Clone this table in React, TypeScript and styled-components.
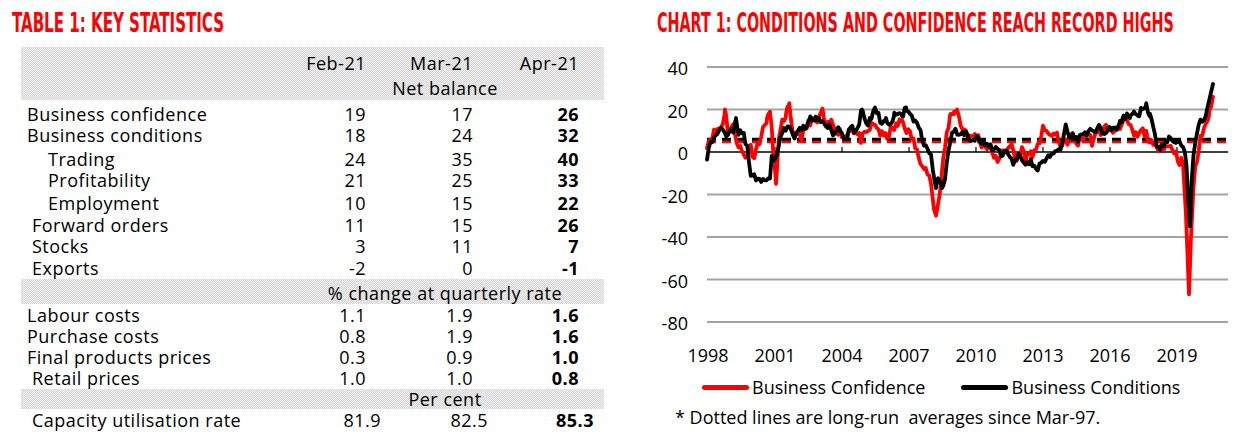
import React from "react";
import styled, { createGlobalStyle } from "styled-components";

const GlobalStyle = createGlobalStyle`
  html, body {
    margin: 0;
    padding: 0;
    background: #fff;
    overflow: hidden;
  }
  body {
    font-family: "Open Sans", "Noto Sans", sans-serif;
    color: #000;
  }
`;

const Page = styled.div`
  width: 1245px;
  height: 443px;
  overflow: hidden;
`;

// the last line of the paragraph above, cut off by the page edge
const TopClip = styled.div`
  height: 7px;
  overflow: hidden;
  padding-left: 118px;
`;

const ClippedLine = styled.p`
  margin: -26px 0 0;
  font-size: 18px;
  line-height: 24px;
  white-space: nowrap;
`;

const Columns = styled.div`
  display: flex;
`;

const LeftColumn = styled.section`
  width: 640px;
  flex: none;
`;

const RightColumn = styled.section`
  flex: 1;
`;

const Heading = styled.h2<{ $indent: number; $scale: number }>`
  margin: 2px 0 0;
  padding-left: ${(p) => p.$indent}px;
  height: 28px;
  font-family: "DejaVu Sans Condensed", "DejaVu Sans", sans-serif;
  font-weight: bold;
  font-size: 27px;
  line-height: 28px;
  color: #f00;
  white-space: nowrap;

  span {
    display: inline-block;
    transform: scaleX(${(p) => p.$scale});
    transform-origin: left center;
  }
`;

const Table = styled.div`
  margin: 10px 0 0 21px;
  width: 583px;
  font-size: 18px;
  letter-spacing: 0.5px;
`;

const Band = styled.div<{ $lh: number; $height: number; $pad: number }>`
  box-sizing: border-box;
  height: ${(p) => p.$height}px;
  padding-top: ${(p) => p.$pad}px;
  line-height: ${(p) => p.$lh}px;
  background: repeating-conic-gradient(#d5d5d5 0 25%, #f1f1f1 0 50%) 0 0 / 2px 2px;
`;

const DataRows = styled.div<{ $top?: number }>`
  padding-top: ${(p) => p.$top ?? 0}px;
  line-height: 21px;
`;

const Row = styled.div<{ $space?: number; $shift?: number }>`
  display: grid;
  grid-template-columns: ${(p) => 279 + (p.$shift ?? 0)}px 66px 107px 106px;
  margin-top: ${(p) => p.$space ?? 0}px;
`;

const Label = styled.div<{ $indent: number }>`
  padding-left: ${(p) => p.$indent}px;
  white-space: nowrap;
`;

const Value = styled.div<{ $bold?: boolean }>`
  text-align: right;
  font-weight: ${(p) => (p.$bold ? 700 : 400)};
`;

const SectionLabel = styled.div`
  margin-left: 279px;
  padding-right: 14px;
  text-align: center;
`;

const ChartBox = styled.div`
  margin-top: 11px;
  height: 322px;

  svg {
    display: block;
  }
`;

const Legend = styled.div`
  display: flex;
  align-items: center;
  gap: 36px;
  margin-top: 6px;
  padding-left: 62px;
  font-size: 18px;
  line-height: 22px;
`;

const LegendItem = styled.div`
  display: flex;
  align-items: center;
  gap: 3px;
`;

const Swatch = styled.span<{ $color: string }>`
  width: 47px;
  height: 5px;
  border-radius: 3px;
  background: ${(p) => p.$color};
`;

const Footnote = styled.p`
  margin: 8px 0 0;
  padding-left: 35px;
  font-size: 18px;
  line-height: 22px;
  white-space: pre;
`;

type StatRow = {
  label: string;
  indent: number;
  v: string[];
  space?: number;
};

const netRows: StatRow[] = [
  { label: "Business confidence", indent: 6, v: ["19", "17", "26"] },
  { label: "Business conditions", indent: 6, v: ["18", "24", "32"] },
  { label: "Trading", indent: 27, v: ["24", "35", "40"], space: 3 },
  { label: "Profitability", indent: 27, v: ["21", "25", "33"] },
  { label: "Employment", indent: 27, v: ["10", "15", "22"], space: 2 },
  { label: "Forward orders", indent: 11, v: ["11", "15", "26"], space: 1 },
  { label: "Stocks", indent: 11, v: ["3", "11", "7"] },
  { label: "Exports", indent: 11, v: ["-2", "0", "-1"], space: 1 },
];

const changeRows: StatRow[] = [
  { label: "Labour costs", indent: 6, v: ["1.1", "1.9", "1.6"] },
  { label: "Purchase costs", indent: 6, v: ["0.8", "1.9", "1.6"] },
  { label: "Final products prices", indent: 6, v: ["0.3", "0.9", "1.0"] },
  { label: "Retail prices", indent: 11, v: ["1.0", "1.0", "0.8"] },
];

const renderRow = (r: StatRow) => (
  <Row key={r.label} $space={r.space}>
    <Label $indent={r.indent}>{r.label}</Label>
    <Value>{r.v[0]}</Value>
    <Value>{r.v[1]}</Value>
    <Value $bold>{r.v[2]}</Value>
  </Row>
);

// chart geometry, in page pixels
const X0 = 707;
const X1 = 1228;
const ZERO = 152;
const STEP = 2.125; // px per index point
const yOf = (v: number) => ZERO - v * STEP;

const confidenceAnchors: [number, number][] = [
  [707, 4], [712, 8], [718, 11], [722, 12], [725, 20], [728, 10], [733, 12], [738, 4],
  [742, 0], [746, -3], [750, 3], [754, -2], [758, 4], [763, 10], [767, 16], [770, 19],
  [772, 8], [774, -5], [776, -15], [778, 3], [782, 13], [786, 18], [789, 22], [793, 6],
  [797, 10], [802, 7], [808, 13], [812, 16], [816, 12], [822, 20], [826, 11], [831, 14],
  [836, 11], [841, 9], [846, 7], [851, 12], [856, 9], [861, 6], [866, 8], [871, 12],
  [876, 13], [881, 8], [886, 7], [891, 10], [896, 12], [902, 15], [906, 11], [913, 6],
  [918, -2], [923, -5], [927, -9], [931, -15], [934, -27], [936, -30], [939, -22],
  [942, -10], [946, 6], [950, 17], [954, 19], [957, 20], [961, 12], [966, 10], [971, 6],
  [976, 9], [981, 4], [986, 3], [991, 1], [995, -2], [998, -7], [1002, 2], [1008, 0],
  [1012, 4], [1016, -5], [1021, 2], [1026, -3], [1031, 0], [1036, -1], [1040, 6],
  [1043, 13], [1047, 7], [1052, 9], [1057, 7], [1062, 3], [1067, 5], [1072, 8], [1077, 4],
  [1082, 6], [1087, 9], [1092, 5], [1097, 8], [1102, 10], [1107, 12], [1112, 9],
  [1117, 12], [1122, 13], [1127, 15], [1132, 9], [1137, 7], [1142, 10], [1147, 8],
  [1152, 3], [1157, 1], [1161, 5], [1166, 2], [1171, 3], [1175, 0], [1179, -4],
  [1183, -5], [1186, -30], [1189, -67], [1191, -40], [1194, -12], [1197, -4], [1200, 5],
  [1203, 10], [1206, 14], [1209, 17], [1211, 21], [1213, 26],
];

const conditionsAnchors: [number, number][] = [
  [707, -2], [710, 3], [715, 8], [720, 10], [723, 12], [727, 8], [730, 12], [733, 9],
  [736, 16], [739, 8], [742, 10], [745, 6], [748, 0], [750, -10], [753, -12], [758, -12],
  [762, -13], [766, -13], [770, -12], [772, -2], [774, -6], [777, 0], [780, 5], [784, 10],
  [788, 13], [792, 8], [795, 7], [800, 10], [805, 12], [810, 16], [815, 15], [818, 16],
  [822, 14], [826, 12], [830, 13], [834, 8], [838, 12], [842, 9], [846, 6], [850, 12],
  [854, 10], [858, 12], [862, 20], [866, 12], [870, 15], [874, 20], [878, 18], [882, 13],
  [886, 16], [890, 12], [894, 17], [898, 18], [902, 17], [906, 21], [910, 18], [914, 15],
  [918, 12], [922, 7], [926, 2], [930, 0], [933, -8], [936, -17], [939, -12], [942, -17],
  [945, -12], [948, 0], [951, 8], [954, 11], [958, 9], [962, 8], [966, 10], [970, 6],
  [974, 4], [978, 8], [982, 3], [986, 5], [990, 3], [994, 0], [998, 3], [1002, -2],
  [1006, 0], [1010, -3], [1014, -5], [1018, -2], [1022, -3], [1026, -5], [1030, -4],
  [1034, -7], [1038, -8], [1042, -5], [1046, -4], [1050, -2], [1054, 0], [1058, -1],
  [1062, 3], [1066, 13], [1070, 5], [1074, 8], [1078, 5], [1082, 10], [1086, 8],
  [1090, 11], [1094, 9], [1098, 12], [1102, 10], [1106, 8], [1110, 12], [1114, 10],
  [1118, 13], [1122, 15], [1126, 17], [1130, 16], [1134, 19], [1138, 17], [1142, 20],
  [1146, 22], [1150, 18], [1154, 12], [1157, 3], [1160, 0], [1163, 3], [1167, 6],
  [1171, 7], [1175, 5], [1179, 6], [1183, 2], [1186, -1], [1188, -20], [1190, -35],
  [1192, -10], [1195, 5], [1198, 12], [1201, 15], [1204, 15], [1207, 20], [1210, 26],
  [1213, 32],
];

const makeRandom = (seed: number) => {
  let s = seed;
  return () => {
    s = (s * 16807) % 2147483647;
    return (s - 1) / 2147483646;
  };
};

const buildPath = (anchors: [number, number][], seed: number, amp: number) => {
  const rand = makeRandom(seed);
  // monthly grid, plus the exact x of every big swing so peaks are not cut off
  const xs: number[] = [];
  for (let x = X0; x < 1213; x += 1.75) xs.push(x);
  anchors.forEach(([x, v]) => {
    if (Math.abs(v) >= 15) xs.push(x);
  });
  xs.sort((a, b) => a - b);

  const pts: string[] = [];
  let i = 0;
  xs.forEach((x) => {
    while (i < anchors.length - 2 && anchors[i + 1][0] < x) i++;
    const [xa, va] = anchors[i];
    const [xb, vb] = anchors[i + 1];
    const t = Math.min(1, Math.max(0, (x - xa) / (xb - xa)));
    const exact = (t === 0 && Math.abs(va) >= 15) || (t === 1 && Math.abs(vb) >= 15);
    const calm = Math.abs(va) > 25 || Math.abs(vb) > 25 || exact;
    const v = va + (vb - va) * t + (calm ? 0 : (rand() - 0.5) * 2 * amp);
    pts.push(`${x.toFixed(2)},${yOf(v).toFixed(2)}`);
  });
  const last = anchors[anchors.length - 1];
  pts.push(`${last[0]},${yOf(last[1]).toFixed(2)}`);
  return "M" + pts.join("L");
};

const confidencePath = buildPath(confidenceAnchors, 11, 2.2);
const conditionsPath = buildPath(conditionsAnchors, 29, 1.6);

const yTicks = [40, 20, -20, -40, -60, -80];
const years = ["1998", "2001", "2004", "2007", "2010", "2013", "2016", "2019"];

const Chart = () => (
  <svg width={605} height={322} viewBox="640 48 605 322" fontFamily='"Open Sans", "Noto Sans", sans-serif' fontSize={18}>
    {yTicks.map((v) => (
      <line key={v} x1={X0} x2={X1} y1={yOf(v)} y2={yOf(v)} stroke="#a3a3a3" strokeWidth={2} />
    ))}
    <line x1={X0} x2={X1} y1={ZERO} y2={ZERO} stroke="#000" strokeWidth={1.6} />
    {years.slice(1).map((_, i) => {
      const x = 708 + (i + 1) * 67;
      return <line key={x} x1={x} x2={x} y1={ZERO} y2={ZERO - 5} stroke="#000" strokeWidth={1.2} />;
    })}
    {[40, 20, 0, -20, -40, -60, -80].map((v) => (
      <text key={v} x={688} y={yOf(v) + 8} textAnchor="end">
        {v}
      </text>
    ))}
    {years.map((y, i) => (
      <text key={y} x={708 + i * 67} y={362} textAnchor="middle">
        {y}
      </text>
    ))}
    <line x1={X0} x2={X1} y1={yOf(4.8)} y2={yOf(4.8)} stroke="#f00" strokeWidth={3} strokeDasharray="9 6" />
    <line x1={X0} x2={X1} y1={yOf(6)} y2={yOf(6)} stroke="#000" strokeWidth={3} strokeDasharray="9 6" />
    <path d={confidencePath} fill="none" stroke="#f00" strokeWidth={3.8} strokeLinejoin="round" strokeLinecap="round" />
    <path d={conditionsPath} fill="none" stroke="#000" strokeWidth={3.8} strokeLinejoin="round" strokeLinecap="round" />
  </svg>
);

const App = () => {
  return (
    <Page>
      <GlobalStyle />
      <TopClip>
        <ClippedLine>
          improved sharply in April, with trading, profitability and employment all jumping higher, supported by strong demand
          in every industry group and by a pickup in
        </ClippedLine>
      </TopClip>
      <Columns>
        <LeftColumn>
          <Heading $indent={12} $scale={0.62}>
            <span>TABLE 1: KEY STATISTICS</span>
          </Heading>
          <Table>
            <Band $height={53} $pad={4} $lh={25}>
              <Row>
                <div />
                <Value>Feb-21</Value>
                <Value>Mar-21</Value>
                <Value>Apr-21</Value>
              </Row>
              <SectionLabel>Net balance</SectionLabel>
            </Band>
            <DataRows $top={4}>{netRows.map(renderRow)}</DataRows>
            <Band $height={25} $pad={4} $lh={21}>
              <SectionLabel>% change at quarterly rate</SectionLabel>
            </Band>
            <DataRows $top={1}>{changeRows.map(renderRow)}</DataRows>
            <Band $height={20} $pad={0} $lh={21}>
              <SectionLabel>Per cent</SectionLabel>
            </Band>
            <DataRows $top={1}>
              <Row $shift={15}>
                <Label $indent={11}>Capacity utilisation rate</Label>
                <Value>81.9</Value>
                <Value>82.5</Value>
                <Value $bold>85.3</Value>
              </Row>
            </DataRows>
          </Table>
        </LeftColumn>
        <RightColumn>
          <Heading $indent={17} $scale={0.59}>
            <span>CHART 1: CONDITIONS AND CONFIDENCE REACH RECORD HIGHS</span>
          </Heading>
          <ChartBox>
            <Chart />
          </ChartBox>
          <Legend>
            <LegendItem>
              <Swatch $color="#f00" />
              Business Confidence
            </LegendItem>
            <LegendItem>
              <Swatch $color="#000" />
              Business Conditions
            </LegendItem>
          </Legend>
          <Footnote>* Dotted lines are long-run  averages since Mar-97.</Footnote>
        </RightColumn>
      </Columns>
    </Page>
  );
};

export default App;
